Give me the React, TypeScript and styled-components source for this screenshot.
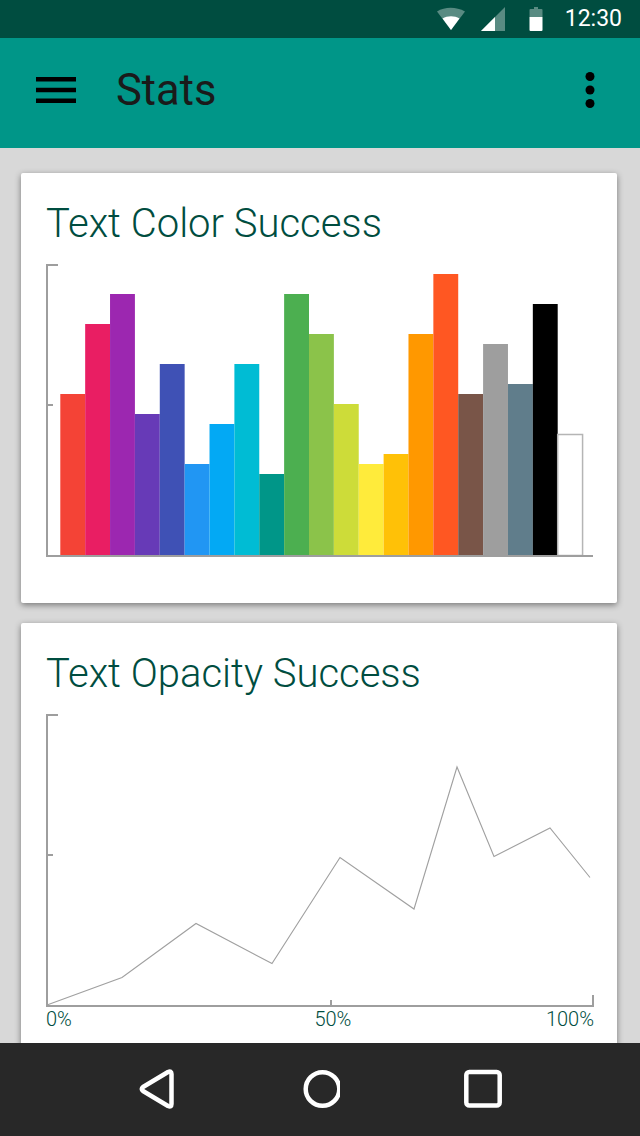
import React from 'react';
import styled, { createGlobalStyle } from 'styled-components';

const COLORS = ['#F44336', '#E91E63', '#9C27B0', '#673AB7', '#3F51B5', '#2196F3', '#03A9F4', '#00BCD4', '#009688', '#4CAF50', '#8BC34A', '#CDDC39', '#FFEB3B', '#FFC107', '#FF9800', '#FF5722', '#795548', '#9E9E9E', '#607D8B', '#000000', '#FFFFFF'];
const TOPS = [394, 324, 294, 414, 364, 464, 424, 364, 474, 294, 334, 404, 464, 454, 334, 274, 394, 344, 384, 304, 434];
const BAR_WIDTH = 24.87;
const LINE_POINTS = '1,290 76,262.5 150,208.5 226,248.5 294,142.5 368,194 411,52 448,141.5 504,113 544,162.5';

const Global = createGlobalStyle`
  html, body { margin: 0; padding: 0; background: #d8d8d8; }
`;

function BarChart() {
  return (
    <ChartSvg width="548" height="292" viewBox="0 0 548 292">
      {TOPS.map((top, i) => {
        const isWhite = COLORS[i] === '#FFFFFF';
        return (
          <rect
            key={i}
            x={14.3 + i * BAR_WIDTH}
            y={top - 265 + (isWhite ? 0.5 : 0)}
            width={BAR_WIDTH}
            height={555 - top}
            fill={COLORS[i]}
            stroke={isWhite ? '#b5b5b5' : 'none'}
            strokeWidth="1.5"
          />
        );
      })}
      <Axis d="M12 0H1V291H547" />
      <Axis d="M1 140H7" />
    </ChartSvg>
  );
}

function LineChart() {
  return (
    <ChartSvg width="548" height="292" viewBox="0 0 548 292">
      <polyline points={LINE_POINTS} fill="none" stroke="#a0a0a0" strokeWidth="1.1" />
      <Axis d="M12 0H1V291H547V280" />
      <Axis d="M1 140H7" />
      <Axis d="M285 291V285" />
    </ChartSvg>
  );
}

function App() {
  return (
    <Screen>
      <Global />
      <StatusBar>
        <svg width="30" height="24" viewBox="0 0 30 24">
          <path d="M1 4.5C9 -0.5 20 -0.5 29 4.5L15 23Z" fill="#fff" opacity="0.35" />
          <path d="M6.5 11.5C11.5 8.5 18.5 8.5 23.5 11.5L15 23Z" fill="#fff" />
        </svg>
        <SignalIcon width="26" height="24" viewBox="0 0 26 24">
          <path d="M1 24L25 0V24Z" fill="#fff" opacity="0.35" />
          <path d="M1 24L15 10V24Z" fill="#fff" />
        </SignalIcon>
        <BatteryIcon width="14" height="24" viewBox="0 0 14 24">
          <path d="M5 0H9V2H12.5A1 1 0 0 1 13.5 3V10H0.5V3A1 1 0 0 1 1.5 2H5Z" fill="#fff" opacity="0.35" />
          <path d="M0.5 10H13.5V23A1 1 0 0 1 12.5 24H1.5A1 1 0 0 1 0.5 23Z" fill="#fff" />
        </BatteryIcon>
        <Clock>12:30</Clock>
      </StatusBar>
      <AppBar>
        <Burger width="40" height="26" viewBox="0 0 40 26">
          <path d="M0 0H40V4.5H0ZM0 10.8H40V15.2H0ZM0 21.5H40V26H0Z" fill="#000" />
        </Burger>
        <PageTitle>Stats</PageTitle>
        <svg width="10" height="37" viewBox="0 0 10 37">
          <circle cx="5" cy="4.5" r="4.5" />
          <circle cx="5" cy="18" r="4.5" />
          <circle cx="5" cy="31.5" r="4.5" />
        </svg>
      </AppBar>
      <Content>
        <Card>
          <CardTitle>Text Color Success</CardTitle>
          <BarChart />
        </Card>
        <Card>
          <CardTitle>Text Opacity Success</CardTitle>
          <LineChart />
          <AxisLabels>
            <span>0%</span>
            <MiddleLabel>50%</MiddleLabel>
            <span>100%</span>
          </AxisLabels>
        </Card>
      </Content>
      <NavBar>
        <svg width="40" height="42" viewBox="0 0 40 42">
          <path d="M34.5 6V36Q34.5 39.5 31 38L6 23Q3.5 21 6 19L31 4Q34.5 2.5 34.5 6Z" fill="none" stroke="#fff" strokeWidth="4.5" strokeLinejoin="round" />
        </svg>
        <svg width="40" height="42" viewBox="0 0 40 42">
          <circle cx="22.5" cy="21" r="16.8" fill="none" stroke="#fff" strokeWidth="4.5" />
        </svg>
        <svg width="40" height="42" viewBox="0 0 40 42">
          <rect x="3.3" y="4" width="33.4" height="33.6" rx="3" fill="none" stroke="#fff" strokeWidth="4.5" />
        </svg>
      </NavBar>
    </Screen>
  );
}

const Screen = styled.div`
  width: 640px;
  height: 1136px;
  display: flex;
  flex-direction: column;
  overflow: hidden;
  background: #d8d8d8;
  font-family: Roboto, "Liberation Sans", sans-serif;
`;

const StatusBar = styled.div`
  height: 38px;
  flex: none;
  display: flex;
  align-items: center;
  justify-content: flex-end;
  padding-right: 18px;
  background: #004d40;
`;

const SignalIcon = styled.svg`
  margin-left: 14px;
`;

const BatteryIcon = styled.svg`
  margin-left: 23px;
`;

const Clock = styled.div`
  margin-left: 22px;
  color: #fff;
  font-size: 23px;
  font-weight: 400;
  line-height: 38px;
`;

const AppBar = styled.header`
  height: 110px;
  flex: none;
  display: flex;
  align-items: center;
  padding: 0 45px 6px 36px;
  box-sizing: border-box;
  background: #009688;
`;

const Burger = styled.svg`
  flex: none;
`;

const PageTitle = styled.h1`
  flex: 1;
  margin: 2px 0 0 40px;
  color: #1a1a1a;
  font-size: 43.5px;
  font-weight: 400;
  line-height: 48px;
`;

const Content = styled.main`
  flex: 1;
  min-height: 0;
  overflow: hidden;
  display: flex;
  flex-direction: column;
  gap: 20px;
  padding: 25px 23px 0 21px;
`;

const Card = styled.section`
  flex: none;
  height: 430px;
  box-sizing: border-box;
  padding: 26px 23px 0 25px;
  background: #fff;
  border-radius: 2px;
  box-shadow: 0 2px 6px rgba(0, 0, 0, 0.45);
`;

const CardTitle = styled.h2`
  margin: 0 0 16px;
  color: #004d40;
  font-size: 40px;
  font-weight: 300;
  line-height: 50px;
`;

const ChartSvg = styled.svg`
  display: block;
  overflow: visible;
`;

const Axis = styled.path`
  fill: none;
  stroke: #9e9e9e;
  stroke-width: 2;
`;

const AxisLabels = styled.div`
  width: 548px;
  display: flex;
  justify-content: space-between;
  color: #004d40;
  font-size: 20px;
  font-weight: 300;
  line-height: 24px;
`;

const MiddleLabel = styled.span`
  margin-left: 48px;
`;

const NavBar = styled.nav`
  position: relative;
  height: 93px;
  flex: none;
  box-sizing: border-box;
  display: flex;
  align-items: center;
  gap: 123px;
  padding: 0 0 2px 137px;
  background: #282828;
`;

export default App;
